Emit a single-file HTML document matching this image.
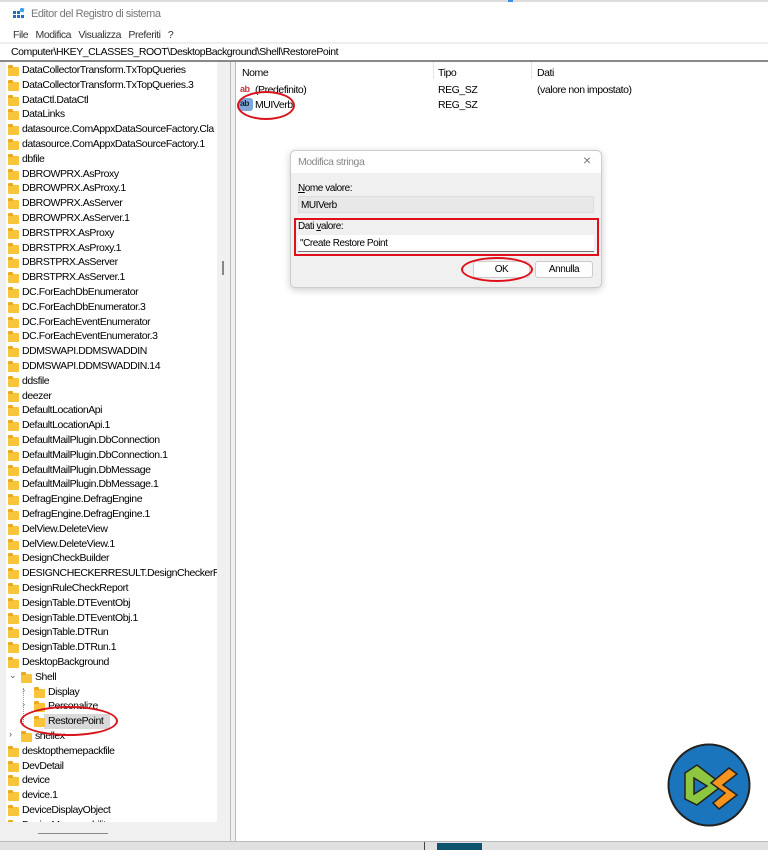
<!DOCTYPE html>
<html><head><meta charset="utf-8"><style>
*{margin:0;padding:0;box-sizing:border-box}
body{width:768px;height:850px;background:#fff;font-family:"Liberation Sans",sans-serif;font-size:10.5px;letter-spacing:-0.45px;color:#000;position:relative;overflow:hidden}
.a{position:absolute;white-space:nowrap}
.f{position:absolute;width:11px;height:9px;background:#f8c43a;border-radius:1px}
.f:before{content:"";position:absolute;left:0;top:-2px;width:5px;height:3px;background:#e9aa20;border-radius:1px 1px 0 0}
#tw{position:absolute;left:0;top:62px;width:217px;height:760px;overflow:hidden}
</style></head><body>
<div class="a" style="left:0;top:0;width:768px;height:2px;background:#ddd"></div>
<div class="a" style="left:508px;top:0;width:5px;height:2px;background:#3a8ee6"></div>
<svg class="a" style="left:12px;top:8px" width="13" height="13" viewBox="0 0 13 13"><rect x="1" y="3" width="3" height="3" fill="#1e6fc1"/><rect x="5" y="3" width="3" height="3" fill="#1e6fc1"/><rect x="1" y="7" width="3" height="3" fill="#1e6fc1"/><rect x="5" y="7" width="3" height="3" fill="#1e6fc1"/><rect x="9" y="7" width="3" height="3" fill="#1e6fc1"/><rect x="8" y="0" width="4" height="4" fill="#3aa0e8" transform="rotate(15 10 2)"/></svg>
<div class="a" style="left:31px;top:8px;color:#777;font-size:11px">Editor del Registro di sistema</div>
<div class="a" style="left:13px;top:29px;color:#333">File&nbsp;&nbsp;&nbsp;Modifica&nbsp;&nbsp;&nbsp;Visualizza&nbsp;&nbsp;&nbsp;Preferiti&nbsp;&nbsp;&nbsp;?</div>
<div class="a" style="left:0;top:42px;width:768px;height:2px;background:#eee"></div>
<div class="a" style="left:11px;top:46px">Computer\HKEY_CLASSES_ROOT\DesktopBackground\Shell\RestorePoint</div>
<div class="a" style="left:0;top:60px;width:768px;height:2px;background:#888"></div>
<div class="a" style="left:0;top:62px;width:6px;height:779px;background:#f0f0f0"></div>
<div class="a" style="left:217px;top:62px;width:13px;height:779px;background:#f0f0f0"></div>
<div class="a" style="left:222px;top:261px;width:2px;height:14px;background:#888"></div>
<div class="a" style="left:6px;top:822px;width:212px;height:19px;background:#f0f0f0"></div>
<div class="a" style="left:38px;top:833px;width:70px;height:1px;background:#888"></div>
<div class="a" style="left:230px;top:62px;width:6px;height:779px;background:#f0f0f0;border-left:1px solid #bbb;border-right:1px solid #bbb"></div>
<div id="tw"><div id="tree"></div></div>
<div class="a" style="left:242px;top:67px">Nome</div>
<div class="a" style="left:438px;top:67px">Tipo</div>
<div class="a" style="left:537px;top:67px">Dati</div>
<div class="a" style="left:433px;top:62px;width:1px;height:17px;background:#e5e5e5"></div>
<div class="a" style="left:531px;top:62px;width:1px;height:17px;background:#e5e5e5"></div>
<div class="a" style="left:240px;top:84px;font-size:9px;font-weight:bold;color:#c33">ab</div>
<div class="a" style="left:255px;top:84px">(Predefinito)</div>
<div class="a" style="left:438px;top:84px">REG_SZ</div>
<div class="a" style="left:537px;top:84px">(valore non impostato)</div>
<div class="a" style="left:239px;top:98px;width:14px;height:13px;background:#7fa8d8;border-radius:3px;color:#123;font-size:8.5px;font-weight:bold;padding-left:1px">ab</div>
<div class="a" style="left:255px;top:99px">MUIVerb</div>
<div class="a" style="left:438px;top:99px">REG_SZ</div>
<div class="a" style="left:237px;top:91px;width:58px;height:29px;border:2px solid #d8141c;border-radius:50%"></div>
<div class="a" style="left:290px;top:150px;width:312px;height:138px;background:#f0f0f0;border:1px solid #ccc;border-radius:5px;box-shadow:0 2px 8px rgba(0,0,0,.2)">
<div style="position:absolute;left:0;top:0;width:310px;height:22px;background:#fff;border-radius:5px 5px 0 0"></div>
<div class="a" style="left:7px;top:5px;color:#888">Modifica stringa</div>
<div class="a" style="left:292px;top:1px;color:#777;font-size:14px">×</div>
<div class="a" style="left:7px;top:32px;font-size:10px"><u>N</u>ome valore:</div>
<div class="a" style="left:7px;top:45px;width:296px;height:17px;background:#e8e8e8;border:1px solid #ddd;padding:3px 2px;font-size:10px">MUIVerb</div>
<div class="a" style="left:3px;top:67px;width:305px;height:38px;border:2px solid #e0101a"></div>
<div class="a" style="left:7px;top:70px;font-size:10px">Dati <u>v</u>alore:</div>
<div class="a" style="left:7px;top:84px;width:296px;height:17px;background:#fff;border-bottom:1px solid #777;padding:3px 2px;font-size:10px">"Create Restore Point</div>
<div class="a" style="left:182px;top:110px;width:57px;height:17px;background:#fdfdfd;border:1px solid #ccc;border-radius:3px;text-align:center;padding-top:2px;font-size:10px">OK</div>
<div class="a" style="left:244px;top:110px;width:58px;height:17px;background:#fdfdfd;border:1px solid #ccc;border-radius:3px;text-align:center;padding-top:2px;font-size:10px">Annulla</div>
<div class="a" style="left:170px;top:106px;width:72px;height:25px;border:2px solid #e0101a;border-radius:50%"></div>
</div>
<div class="a" style="left:20px;top:706px;width:98px;height:30px;border:2px solid #d8141c;border-radius:50%"></div>
<svg class="a" style="left:667px;top:743px" width="84" height="84" viewBox="0 0 84 84"><circle cx="42" cy="42" r="40.5" fill="#1b75bc" stroke="#222" stroke-width="2"/><path d="M18 30 L30 22 L56 42 L30 62 L18 56 Z M27 35 L27 51 L40 43 Z" fill="#8dc63f" stroke="#222" stroke-width="1.5" fill-rule="evenodd"/><path d="M44 40 L62 25 L70 31 L56 42 L70 52 L52 66 L46 60 L58 50 Z" fill="#f7941d" stroke="#222" stroke-width="1.5"/></svg>
<div class="a" style="left:0;top:841px;width:768px;height:9px;background:#e1e1e1;border-top:1px solid #bbb"></div>
<div class="a" style="left:424px;top:842px;width:1px;height:8px;background:#444"></div>
<div class="a" style="left:437px;top:843px;width:45px;height:7px;background:#0d546f"></div>
<script>
var items=["DataCollectorTransform.TxTopQueries","DataCollectorTransform.TxTopQueries.3","DataCtl.DataCtl","DataLinks","datasource.ComAppxDataSourceFactory.Cla","datasource.ComAppxDataSourceFactory.1","dbfile","DBROWPRX.AsProxy","DBROWPRX.AsProxy.1","DBROWPRX.AsServer","DBROWPRX.AsServer.1","DBRSTPRX.AsProxy","DBRSTPRX.AsProxy.1","DBRSTPRX.AsServer","DBRSTPRX.AsServer.1","DC.ForEachDbEnumerator","DC.ForEachDbEnumerator.3","DC.ForEachEventEnumerator","DC.ForEachEventEnumerator.3","DDMSWAPI.DDMSWADDIN","DDMSWAPI.DDMSWADDIN.14","ddsfile","deezer","DefaultLocationApi","DefaultLocationApi.1","DefaultMailPlugin.DbConnection","DefaultMailPlugin.DbConnection.1","DefaultMailPlugin.DbMessage","DefaultMailPlugin.DbMessage.1","DefragEngine.DefragEngine","DefragEngine.DefragEngine.1","DelView.DeleteView","DelView.DeleteView.1","DesignCheckBuilder","DESIGNCHECKERRESULT.DesignCheckerResu","DesignRuleCheckReport","DesignTable.DTEventObj","DesignTable.DTEventObj.1","DesignTable.DTRun","DesignTable.DTRun.1","DesktopBackground",["Shell",1,"v"],["Display",2,">"],["Personalize",2,">"],["RestorePoint",2,""],["shellex",1,">"],"desktopthemepackfile","DevDetail","device","device.1","DeviceDisplayObject","DeviceManageability"];
var h="";items.forEach(function(it,i){var n=it,l=0,e="";if(typeof it!="string"){n=it[0];l=it[1];e=it[2];}
var y=2+i*14.8,x=8+l*13;
if(l&&e)h+='<div class="a" style="left:'+(x-12)+'px;top:'+(y-1)+'px;color:#555;font-size:9px">'+(e=="v"?"&#8964;":"&#8250;")+'</div>';
if(n=="RestorePoint")h+='<div class="a" style="left:'+(x+10)+'px;top:'+(y-1)+'px;width:66px;height:15px;background:#d9d9d9"></div>';
h+='<div class="f" style="left:'+x+'px;top:'+(y+3)+'px"></div><div class="a" style="left:'+(x+14)+'px;top:'+y+'px">'+n+'</div>';});
h+='<div class="a" style="left:23px;top:626px;width:1px;height:36px;border-left:1px dotted #999"></div>';
document.getElementById("tree").outerHTML=h;
</script>
</body></html>
